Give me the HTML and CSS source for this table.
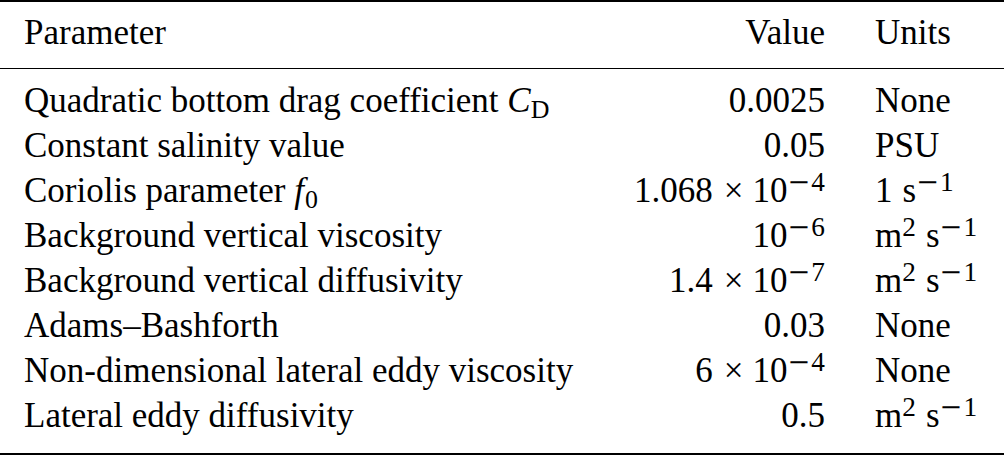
FILE: index.html
```html
<!DOCTYPE html>
<html lang="en">
<head>
<meta charset="utf-8">
<title>Parameters</title>
<link rel="stylesheet" href="styles.css">
</head>
<body>
<table class="params">
  <thead>
    <tr>
      <th class="name">Parameter</th>
      <th class="value">Value</th>
      <th class="units">Units</th>
    </tr>
  </thead>
  <tbody>
    <tr class="first">
      <td class="name">Quadratic bottom drag coefficient <i>C</i><sub>D</sub></td>
      <td class="value">0.0025</td>
      <td class="units">None</td>
    </tr>
    <tr>
      <td class="name">Constant salinity value</td>
      <td class="value">0.05</td>
      <td class="units">PSU</td>
    </tr>
    <tr>
      <td class="name">Coriolis parameter <i class="f">f</i><sub>0</sub></td>
      <td class="value">1.068<span class="op">×</span>10<sup><span class="minus">−</span>4</sup></td>
      <td class="units">1<span class="thin"></span>s<sup><span class="minus">−</span>1</sup></td>
    </tr>
    <tr>
      <td class="name">Background vertical viscosity</td>
      <td class="value">10<sup><span class="minus">−</span>6</sup></td>
      <td class="units">m<sup>2</sup><span class="thin"></span>s<sup><span class="minus">−</span>1</sup></td>
    </tr>
    <tr>
      <td class="name">Background vertical diffusivity</td>
      <td class="value">1.4<span class="op">×</span>10<sup><span class="minus">−</span>7</sup></td>
      <td class="units">m<sup>2</sup><span class="thin"></span>s<sup><span class="minus">−</span>1</sup></td>
    </tr>
    <tr>
      <td class="name">Adams–Bashforth</td>
      <td class="value">0.03</td>
      <td class="units">None</td>
    </tr>
    <tr>
      <td class="name">Non-dimensional lateral eddy viscosity</td>
      <td class="value">6<span class="op">×</span>10<sup><span class="minus">−</span>4</sup></td>
      <td class="units">None</td>
    </tr>
    <tr class="last">
      <td class="name">Lateral eddy diffusivity</td>
      <td class="value">0.5</td>
      <td class="units">m<sup>2</sup><span class="thin"></span>s<sup><span class="minus">−</span>1</sup></td>
    </tr>
  </tbody>
</table>
</body>
</html>
```
FILE: styles.css
```css
html, body {
  margin: 0;
  padding: 0;
  background: #ffffff;
}

.params {
  width: 1004px;
  border-collapse: collapse;
  font-family: "Liberation Serif", "Times New Roman", serif;
  font-size: 35px;
  line-height: 45px;
  color: #000;
  border-top: 2px solid #000;
  border-bottom: 2px solid #000;
}

.params th,
.params td {
  padding: 0;
  font-weight: normal;
  white-space: nowrap;
  vertical-align: baseline;
}

.params thead th {
  padding-top: 8px;
  padding-bottom: 13px;
  border-bottom: 1px solid #000;
}

.params tbody tr.first td {
  padding-top: 9px;
}

.params tbody tr.last td {
  padding-bottom: 15px;
}

.name {
  text-align: left;
  padding-left: 24px !important;
}

.value {
  text-align: right;
}

.units {
  text-align: left;
  width: 129px;
  padding-left: 50px !important;
}

.params i {
  font-style: italic;
}

.params i.f {
  margin-right: 1px;
}

.op {
  margin: 0 9px 0 11px;
}

.params sup {
  font-size: 0.78em;
  line-height: 0;
  vertical-align: 11px;
}

.params sub {
  font-size: 0.74em;
  line-height: 0;
  vertical-align: -6px;
}

.minus {
  font-family: "DejaVu Serif", "Liberation Serif", serif;
  margin: 0 1px 0 0;
}

.thin {
  display: inline-block;
  width: 10px;
}
```
